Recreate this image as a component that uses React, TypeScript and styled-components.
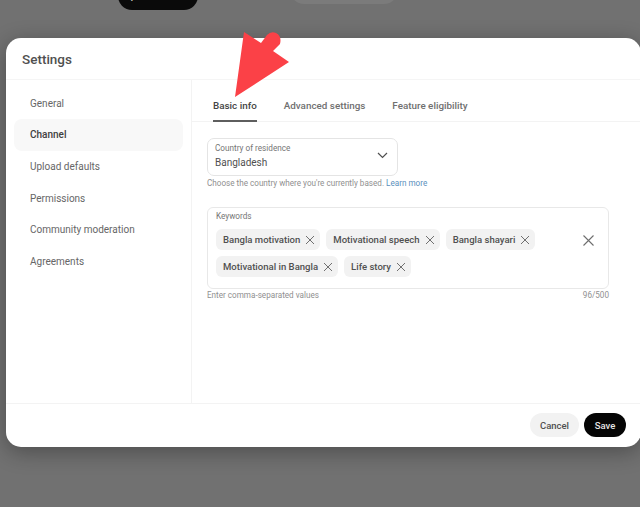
import * as React from "react";
import styled, { createGlobalStyle } from "styled-components";

const GlobalStyle = createGlobalStyle`
  html, body {
    margin: 0;
    padding: 0;
    overflow: hidden;
  }

  body {
    font-family: Roboto, "Liberation Sans", sans-serif;
  }
`;

const Backdrop = styled.div`
  position: relative;
  width: 640px;
  height: 507px;
  overflow: hidden;
  padding: 38px 0 0 6px;
  box-sizing: border-box;
  background: #717171;
`;

const UploadPill = styled.div`
  position: absolute;
  left: 118px;
  top: -18px;
  width: 80px;
  height: 28px;
  border-radius: 14px;
  background: #0a0a0a;
  color: #bbb;
  font-size: 11px;
  font-weight: 500;
  line-height: 28px;
  text-align: center;
`;

const GhostPill = styled.div`
  position: absolute;
  left: 290px;
  top: -24px;
  width: 108px;
  height: 28px;
  border-radius: 14px;
  background: #7b7b7b;
`;

const Dialog = styled.div`
  width: 635px;
  height: 409px;
  display: flex;
  flex-direction: column;
  background: #fff;
  border-radius: 15px;
  box-shadow: 0 5px 22px rgba(0, 0, 0, 0.32);
  overflow: hidden;
`;

const DialogHeader = styled.div`
  height: 42px;
  padding: 12px 16px 0;
  box-sizing: border-box;
  border-bottom: 1px solid #f5f5f5;
  flex: none;
  color: #505050;
  font-size: 13.5px;
  font-weight: 500;
  line-height: 18px;
`;

const DialogBody = styled.div`
  flex: 1;
  display: flex;
  min-height: 0;
`;

const Sidebar = styled.nav`
  width: 186px;
  flex: none;
  box-sizing: border-box;
  padding: 7.5px 8px 0;
  border-right: 1px solid #f3f3f3;
  display: flex;
  flex-direction: column;
`;

const NavItem = styled.div<{ $active?: boolean }>`
  height: 31.6px;
  padding-left: 16px;
  border-radius: 8px;
  display: flex;
  align-items: center;
  font-size: 10px;
  color: ${(p) => (p.$active ? "#404040" : "#666")};
  font-weight: ${(p) => (p.$active ? 500 : 400)};
  background: ${(p) => (p.$active ? "#f8f8f8" : "transparent")};
`;

const Main = styled.main`
  flex: 1;
  min-width: 0;
`;

const Tabs = styled.div`
  height: 42px;
  display: flex;
  gap: 27px;
  padding-left: 21px;
  box-sizing: border-box;
  border-bottom: 1px solid #f3f3f3;
`;

const Tab = styled.div<{ $active?: boolean }>`
  height: 42px;
  box-sizing: border-box;
  padding-top: 19px;
  font-size: 9.85px;
  font-weight: 500;
  line-height: 13px;
  color: ${(p) => (p.$active ? "#444" : "#707070")};
  border-bottom: ${(p) => (p.$active ? "2px solid #5e5e5e" : "none")};
`;

const Content = styled.div`
  padding: 16px 0 0 15px;
`;

const SelectBox = styled.div`
  width: 191px;
  height: 38px;
  box-sizing: border-box;
  border: 1px solid #e4e4e4;
  border-radius: 7px;
  padding: 0 9px 3px 7px;
  display: flex;
  align-items: center;
  justify-content: space-between;
`;

const FieldLabel = styled.div`
  font-size: 8.2px;
  line-height: 11px;
  color: #757575;
`;

const SelectValue = styled.div`
  margin-top: 2px;
  font-size: 10px;
  line-height: 13px;
  color: #505050;
`;

const Hint = styled.div`
  margin-top: 2px;
  font-size: 8.15px;
  line-height: 11px;
  color: #8f8f8f;
`;

const HelpLink = styled.span`
  color: #5a8fbd;
`;

const KeywordsBox = styled.div`
  position: relative;
  width: 402px;
  height: 82px;
  margin-top: 18px;
  box-sizing: border-box;
  border: 1px solid #e8e8e8;
  border-radius: 6px;
  padding: 3px 8px 0;
`;

const ChipList = styled.div`
  width: 340px;
  margin-top: 7px;
  display: flex;
  flex-wrap: wrap;
  gap: 6px 6px;
`;

const Chip = styled.div`
  height: 21px;
  box-sizing: border-box;
  padding: 0 5px 0 7px;
  display: flex;
  align-items: center;
  gap: 5px;
  border-radius: 6px;
  background: #f2f2f2;
  font-size: 9.55px;
  font-weight: 500;
  color: #505050;
  white-space: nowrap;
`;

const ClearAll = styled.svg`
  position: absolute;
  right: 14px;
  top: 27px;
`;

const FieldFooter = styled.div`
  width: 402px;
  margin-top: 1px;
  display: flex;
  justify-content: space-between;
  font-size: 8.15px;
  line-height: 11px;
  color: #8f8f8f;
`;

const DialogFooter = styled.div`
  height: 44px;
  flex: none;
  box-sizing: border-box;
  border-top: 1px solid #f3f3f3;
  display: flex;
  align-items: flex-start;
  gap: 5px;
  padding: 9px 15px 0 0;
  justify-content: flex-end;
`;

const FooterButton = styled.button<{ $primary?: boolean }>`
  height: 24px;
  border: none;
  border-radius: 12px;
  padding: 0;
  width: ${(p) => (p.$primary ? "42px" : "49px")};
  font: 500 9.5px Roboto, "Liberation Sans", sans-serif;
  color: ${(p) => (p.$primary ? "#e6e6e6" : "#505050")};
  background: ${(p) => (p.$primary ? "#050505" : "#f2f2f2")};
`;

const Arrow = styled.svg`
  position: absolute;
  left: 234px;
  top: 31px;
`;

const Cross = () => (
  <svg width="10" height="10" viewBox="0 0 10 10" fill="none" style={{ flex: "none" }}>
    <path d="M1 1l8 8M9 1L1 9" stroke="#707070" strokeWidth="1" />
  </svg>
);

const navItems = ["General", "Channel", "Upload defaults", "Permissions", "Community moderation", "Agreements"];
const keywords = ["Bangla motivation", "Motivational speech", "Bangla shayari", "Motivational in Bangla", "Life story"];

export default function App() {
  return (
    <Backdrop>
      <GlobalStyle />
      <UploadPill>Upload videos</UploadPill>
      <GhostPill />
      <Dialog>
        <DialogHeader>Settings</DialogHeader>
        <DialogBody>
          <Sidebar>
            {navItems.map((item) => (
              <NavItem key={item} $active={item === "Channel"}>
                {item}
              </NavItem>
            ))}
          </Sidebar>
          <Main>
            <Tabs>
              <Tab $active>Basic info</Tab>
              <Tab>Advanced settings</Tab>
              <Tab>Feature eligibility</Tab>
            </Tabs>
            <Content>
              <SelectBox>
                <div>
                  <FieldLabel>Country of residence</FieldLabel>
                  <SelectValue>Bangladesh</SelectValue>
                </div>
                <svg width="11" height="7" viewBox="0 0 11 7" fill="none">
                  <path d="M1 1l4.5 4.5L10 1" stroke="#505050" strokeWidth="1.2" />
                </svg>
              </SelectBox>
              <Hint>
                Choose the country where you're currently based. <HelpLink>Learn more</HelpLink>
              </Hint>
              <KeywordsBox>
                <FieldLabel>Keywords</FieldLabel>
                <ChipList>
                  {keywords.map((word) => (
                    <Chip key={word}>
                      {word}
                      <Cross />
                    </Chip>
                  ))}
                </ChipList>
                <ClearAll width="11" height="11" viewBox="0 0 11 11" fill="none">
                  <path d="M.5.5l10 10M10.5.5l-10 10" stroke="#6e6e6e" strokeWidth="1.1" />
                </ClearAll>
              </KeywordsBox>
              <FieldFooter>
                <span>Enter comma-separated values</span>
                <span>96/500</span>
              </FieldFooter>
            </Content>
          </Main>
        </DialogBody>
        <DialogFooter>
          <FooterButton>Cancel</FooterButton>
          <FooterButton $primary>Save</FooterButton>
        </DialogFooter>
      </Dialog>
      <Arrow width="56" height="72" viewBox="0 0 56 72" fill="none">
        <path
          d="M10 1 L1 66 L55 31 L39 20 L46 13 Q48 5 42 2 Q37 0 33 4 L27 12 Z"
          fill="#fb4147"
        />
      </Arrow>
    </Backdrop>
  );
}
